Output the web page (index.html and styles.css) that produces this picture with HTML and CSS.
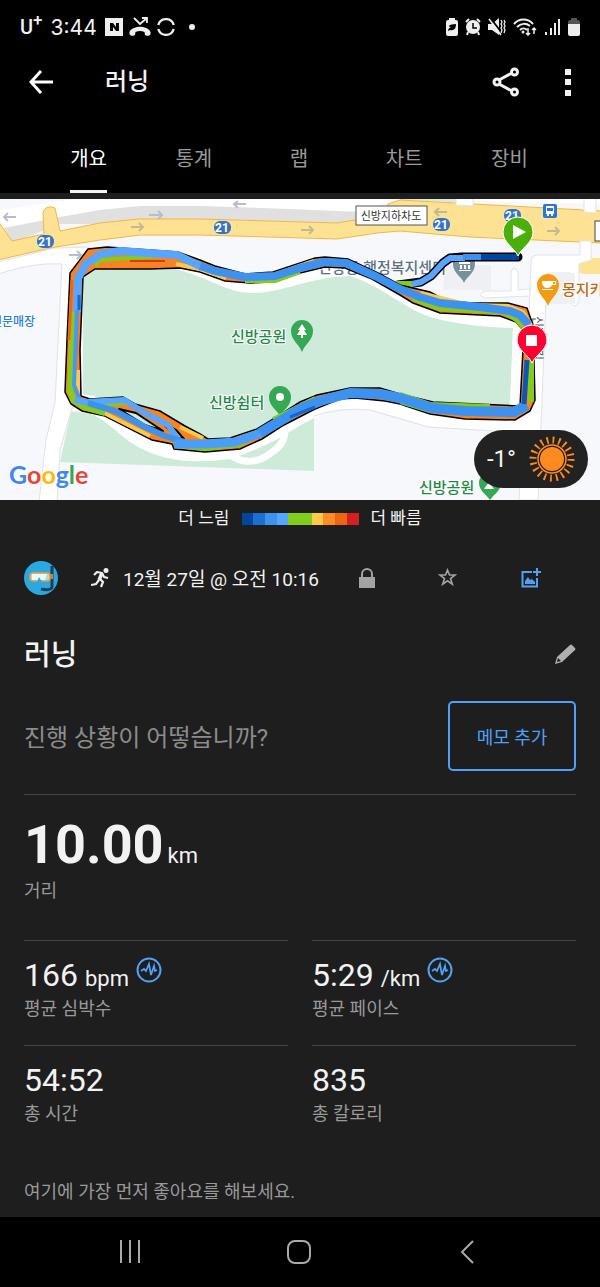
FILE: index.html
```html
<!DOCTYPE html>
<html lang="ko">
<head>
    <meta charset="UTF-8">
    <meta name="viewport" content="width=device-width, initial-scale=1.0">
    <title>러닝</title>
    <link rel="stylesheet" href="styles.css">
</head>
<body>
    <div class="status-bar">
        <div class="status-left">
            <span class="carrier">U<sup>+</sup></span>
            <span class="clock">3:44</span>
            <svg width="18" height="18" viewBox="0 0 18 18"><path fill="#eee" fill-rule="evenodd" d="M0 0h18v18H0zM5 5v8h3V9l3 4h3V5h-3v4L8 5z"/></svg>
            <svg width="22" height="20" viewBox="0 0 22 20"><path fill="#eee" d="M1 18c-2-3 1-6 4-7 4-1.600 8-1.600 12 0 3 1 6 4 4 7-1 1-4 1-5 0l-.5-3c-3-1.300-6-1.300-9 0L6 18c-1 1-4 1-5 0z"/><path fill="none" stroke="#eee" stroke-width="1.800" d="M5 1l6 6 7-6M13 1h5v5"/></svg>
            <svg width="18" height="18" viewBox="0 0 18 18"><path fill="none" stroke="#eee" stroke-width="2.400" d="M1.300 7A8 8 0 0 1 16.700 7M1.300 11A8 8 0 0 0 16.700 11"/></svg>
            <span class="dot"></span>
        </div>
        <div class="status-right">
            <svg width="12" height="18" viewBox="0 0 12 18"><path fill="#eee" d="M3 2V0h6v2h1q2 0 2 2v12q0 2-2 2H2q-2 0-2-2V4q0-2 2-2z"/><path fill="#000" d="M10 6c0 5-2 7-6 6l-2 1c0-2 1-3 3-4-4 0-2-3 5-3z"/></svg>
            <svg width="16" height="18" viewBox="0 0 16 18"><circle cx="8" cy="9" r="7" fill="#eee"/><path fill="none" stroke="#eee" stroke-width="2" d="M1 4l3-3M12 1l3 3M3 14l-1 3M13 14l1 3"/><path fill="none" stroke="#000" stroke-width="1.500" d="M8 5v5h4"/></svg>
            <svg width="18" height="18" viewBox="0 0 18 18"><path fill="#eee" d="M0 6h4l7-6v17l-7-5H0z"/><path stroke="#000" stroke-width="2" d="M3 1l11 14"/><path stroke="#eee" stroke-width="1.500" d="M1 1l12 16"/><path fill="none" stroke="#eee" stroke-width="1.300" d="M13 2l1 2-1 2 1 2-1 2 1 2-1 3M16 2l1 2-1 2 1 2-1 2 1 2-1 3"/></svg>
            <svg width="24" height="18" viewBox="0 0 24 18"><path fill="none" stroke="#eee" stroke-width="2" d="M1 6c5-6 14-6 19 0M4 9c4-4 9-4 13-1M7 12c2-2 5-2 7 0"/><circle cx="10" cy="14" r="1.500" fill="#eee"/><path fill="none" stroke="#eee" stroke-width="1.500" d="M15 10v7M13 15l2 2 2-2M21 16v-6M19 12l2-2 2 2"/></svg>
            <svg width="17" height="18" viewBox="0 0 17 18"><path stroke="#eee" stroke-width="2" d="M2 14v3M7 10v7M11 5v12M15 1v16"/></svg>
            <svg width="12" height="18" viewBox="0 0 12 18"><path fill="#555" d="M3 2V0h6v2h1q2 0 2 2v3H0V4q0-2 2-2z"/><path fill="#eee" d="M0 6h12v10q0 2-2 2H2q-2 0-2-2z"/></svg>
        </div>
    </div>

    <header class="app-bar">
        <button class="icon-button" aria-label="뒤로">
            <svg width="24" height="24" viewBox="0 0 24 24"><path fill="none" stroke="#fff" stroke-width="3" d="M12 1L2 12l10 11M2 12h22"/></svg>
        </button>
        <h1>러닝</h1>
        <button class="icon-button share" aria-label="공유">
            <svg width="28" height="30" viewBox="0 0 28 30"><g fill="none" stroke="#f2f2f2" stroke-width="3"><path d="M7 13l13-7M7 17l13 7"/><circle cx="5" cy="15" r="3"/><circle cx="22.500" cy="5" r="3"/><circle cx="22.500" cy="25" r="3"/></g></svg>
        </button>
        <button class="icon-button" aria-label="더보기">
            <svg width="6" height="27" viewBox="0 0 6 27"><path fill="#f2f2f2" d="M0 0h6v6H0zM0 10h6v6H0zM0 21h6v6H0z"/></svg>
        </button>
    </header>

    <nav class="tabs">
        <a href="#" class="active"><span>개요</span></a>
        <a href="#"><span>통계</span></a>
        <a href="#"><span>랩</span></a>
        <a href="#"><span>차트</span></a>
        <a href="#"><span>장비</span></a>
    </nav>

    <main>
        <div class="map">
            <svg class="map-canvas" viewBox="0 199 600 301" preserveAspectRatio="xMidYMid slice">
                <rect y="199" width="600" height="301" fill="#f7f8fb"/>

                <!-- top roads -->
                <path fill="#fff" d="M0 210L75 199H600V204L400 199 340 214 200 206H140L10 230 0 220z"/>
                <path fill="#e0e0e0" d="M4 228L60 217 100 210 140 206H200L290 209 385 213 350 224H60L12 243z"/>
                <path fill="#d6ebdc" d="M400 199h56v3l-56-2z"/>
                <path fill="#fff" stroke="#dfe2e8" d="M-2 262L55 248 90 247 78 268 81 395 72 408 60 450 57 502H39L46 440 55 403 62 264C40 263 25 266-2 274z"/>
                <path fill="#fff" d="M82 268L95 250 190 252 235 276 275 276 325 259 350 260 400 285 440 302 513 306V329L470 327 430 320 385 293 350 278 325 279 280 292 240 293 200 278 100 268 82 280z"/>
                <path fill="#fde293" stroke="#f4b740" d="M-2 221L12 241 44 234 43 213Q45 204 55 208L60 231 100 223 138 219H200L337 223 355 220 385 212 388 204 400 200 602 211V243L470 237 400 231 377 233 337 239 200 235H140L100 240 50 248-2 260z"/>
                <path fill="#fff" stroke="#dfe2e8" d="M456 190h17v16l-17-1zM584 190h12v23l-12-1z"/>
                <path fill="#fde293" d="M600 258h-15q-8 0-8 8t8 8h15z"/>

                <!-- streets on the right -->
                <g fill="#fff" stroke="#dfe2e8">
                    <path d="M531 262Q531 255 538 255H580V241H591V260L579 264V301Q573 312 571 300V273H547L538 500H519L528 340z"/>
                    <path d="M485 291L511 291V272Q514 264 518 272V290L530 289V296L485 298Q476 295 485 291z"/>
                </g>
                <path fill="#eff0f3" d="M445 265h46v25h-48zM548 273h27v31h-27z"/>

                <!-- park -->
                <path fill="#ceead8" d="M83 278L96 268H170C210 276 225 294 255 293S310 277 350 276C380 285 400 306 430 317Q465 327 513 328L510 407 430 405 360 390 310 400 270 425 210 442 170 430 83 400z"/>
                <path fill="#ceead8" d="M71 412L92 410 200 440 314 412 314 471 60 462z"/>
                <path fill="none" stroke="#fff" stroke-width="18" stroke-linejoin="round" d="M74 402L92 405Q105 409 124 426T168 449 228 450Q258 441 290 421T350 400 428 417L530 424"/>
                <path fill="none" stroke="#dfe2e8" stroke-width="1" d="M314 416Q340 407 370 410L428 427 510 432"/>
                <path fill="none" stroke="#fff" stroke-width="7" d="M232 456C248 466 262 461 275 450 286 441 285 434 285 422"/>
                <path fill="#fff" d="M513 328h10l-5 80h-8z"/>

                <!-- one way arrows -->
                <g fill="none" stroke="#b9bccb" stroke-width="2">
                    <path d="M16 217H4M8 213l-4 4 4 4M149 215h13M158 211l4 4-4 4M246 204H234M238 201l-4 3 4 4M69 255h12M77 251l4 4-4 4"/>
                    <path stroke="#c6b98f" d="M131 227h12M139 223l4 4-4 4M301 230h12M309 226l4 4-4 4M447 212H435M439 208l-4 4 4 4M547 231h12M555 227l4 4-4 4"/>
                </g>

                <!-- route number shields -->
                <g fill="#3674c6">
                    <rect x="37" y="235" width="17" height="13" rx="6"/>
                    <rect x="214" y="221" width="17" height="13" rx="6"/>
                    <rect x="433" y="218" width="17" height="13" rx="6"/>
                    <rect x="504" y="209" width="17" height="13" rx="6"/>
                </g>
                <g class="shield">
                    <text x="45" y="246">21</text>
                    <text x="222" y="232">21</text>
                    <text x="441" y="229">21</text>
                    <text x="512" y="220">21</text>
                </g>

                <rect x="356" y="206" width="71" height="19" fill="#fff" stroke="#555"/>
                <text class="road-name" x="391" y="220">신방지하차도</text>
                <rect x="595" y="221" width="20" height="20" fill="#fff" stroke="#444"/>
                <rect x="543" y="204" width="14" height="14" rx="2" fill="#2577df"/>
                <path fill="#fff" d="M546 206h8v8h-1v2h-2v-2h-2v2h-2v-2h-1zM547 208v3h6v-3z" fill-rule="evenodd"/>

                <text class="place blue" x="-9" y="326">전문매장</text>
                <text class="place slate" x="318" y="273">신방동 행정복지센터</text>
                <text class="place green" x="231" y="342">신방공원</text>
                <text class="place green" x="209" y="408">신방쉼터</text>
                <text class="place green" x="419" y="493">신방공원</text>
                <text class="place brown" x="562" y="295">몽지키</text>
                <text class="street" x="533" y="316" transform="rotate(90 533 316)">신방로길</text>

                <path fill="#34a853" d="M302 352C299 344 291 340 291 331A11 11 0 0 1 313 331C313 340 305 344 302 352z"/>
                <path fill="#fff" d="M302 324l4 6h-2l3 5h-4v3h-2v-3h-4l3-5h-2z"/>
                <path fill="#34a853" d="M280 416C277 410 269 406 269 397A11 11 0 0 1 291 397C291 406 283 410 280 416z"/>
                <circle cx="280" cy="397" r="4" fill="#fff"/>
                <path fill="#34a853" d="M490 500C487 495 479 491 479 483A11 11 0 0 1 501 483C501 491 493 495 490 500z"/>
                <path fill="#fff" d="M489 482l5 7h-10z"/>
                <path fill="#78909c" d="M464 283C462 277 453 273 453 264A11 11 0 0 1 475 264C475 273 466 277 464 283z"/>
                <path fill="#fff" d="M459 262h11v2h-11zM460 265h2v4h-2zM464 265h2v4h-2zM468 265h2v4h-2zM459 270h12v1h-12z"/>
                <path fill="#f39c12" d="M548 306C546 299 537 294 537 285A11 11 0 0 1 559 285C559 294 550 299 548 306z"/>
                <path fill="#fff" fill-rule="evenodd" d="M542 281h14v4h-4q-1 3-5 3-5 0-5-7zM553 282v2h2v-2zM542 289h11v1h-11z"/>

                <!-- first leg -->
                <g fill="none" stroke-linejoin="round">
                    <path stroke="#000" stroke-width="9" stroke-linecap="round" d="M518 257H462L450 258 443 263 431 276 421 282 398 285"/>
                    <path stroke="#84cc1c" stroke-width="6" d="M385 284L413 284"/>
                    <path stroke="#57a5ff" stroke-width="6" d="M412 284L421 282 431 276 443 263 450 258H465"/>
                    <path stroke="#3f8ff0" stroke-width="6" d="M463 257H481"/>
                    <path stroke="#0046a0" stroke-width="6" d="M481 257H519"/>
                </g>

                <!-- laps around the park -->
                <path fill="#f98222" fill-rule="evenodd" stroke="#000" stroke-width="1.500" d="M88 249L107 247 178 252 200 260 215 266 245 274 273 272 315 258 325 257 348 259 378 273 400 285 430 292 445 300 470 303 508 303 527 308 533 325 535 400 530 411 515 420 465 419 430 414 400 404 385 401 355 398 340 399 315 409 282 426 262 439 240 449 205 452 174 449 172 444 152 440 105 416 82 411 71 404 65 392 67 340 70 273zM95 269L150 269 180 268 200 272 225 281 250 283 272 282 300 273 325 267 345 268 372 279 400 295 413 303 440 313 500 316 516 322 523 330 523 350 520 406 433 402 400 394 380 388 350 388 317 395 300 402 275 418 257 429 230 438 208 439 200 434 185 426 160 411 135 404 123 397 90 399 81 396 80 350 83 277z"/>
                <g fill="none" stroke-linejoin="round">
                    <path stroke="#fdc94a" stroke-width="4" d="M176 264L200 269 226 278M268 277L314 261M420 293L470 305 508 306 523 312 531 325M78 370V394M180 427L203 438M100 411L150 436"/>
                    <path stroke="#84cc1c" stroke-width="4" d="M95 265L100 260 160 256M245 281H275L300 272M412 299L440 309 505 313 516 320 525 330M88 406L128 403 175 430M175 446L205 449 240 445 278 423M400 394L430 404 490 406M400 402L430 411 510 415M273 419L315 398"/>
                    <path stroke="#84cc1c" stroke-width="6" d="M74 312L70 390 73 400 84 407 105 413M531 355L531 402"/>
                    <path stroke="#ed6712" stroke-width="3" d="M72 280L69 340M77 323L76 355"/>
                    <path stroke="#d23c16" stroke-width="2" d="M130 261H165"/>
                    <path stroke="#000" stroke-width="2" fill="#ceead8" d="M119 409L136 413 163 431 145 425zM157 418L176 430 184 439 178 438z"/>
                    <path stroke="#57a5ff" stroke-width="8" d="M77 312L78 278 86 264 101 254 120 251 177 255 202 267"/>
                    <path stroke="#4598f5" stroke-width="4" d="M77 310L74 385 80 400"/>
                    <path stroke="#3d92f0" stroke-width="8" d="M200 266L215 271 245 277 275 276 300 268 324 262 346 263 375 276 400 289 420 297 440 303 480 307 510 311 520 315 529 325"/>
                    <path stroke="#57a5ff" stroke-width="6" d="M75 400L85 402 124 400 145 413 168 425 180 442"/>
                    <path stroke="#3d92f0" stroke-width="6" d="M88 403L115 411 145 427 165 436 185 442"/>
                    <path stroke="#4a9df8" stroke-width="9" d="M174 444H205L235 442 258 434 280 421 305 406"/>
                    <path stroke="#3d92f0" stroke-width="10" d="M260 433L300 409 320 401 350 393 380 394 400 398 432 408 465 411 514 412 527 405"/>
                    <path stroke="#0b57b8" stroke-width="5" d="M527 360L524 404"/>
                    <path stroke="#1668cf" stroke-width="3" d="M290 417L315 407M79 295V310"/>
                </g>

                <path fill="#4cae09" stroke="#fff" d="M518 256C514 247 503 243 503 232A15 15 0 0 1 533 232C533 243 522 247 518 256z"/>
                <path fill="#fff" d="M513 225l13 7-13 7z"/>
                <path fill="#ff0030" stroke="#fff" d="M532 363C528 354 517 350 517 340A15 15 0 0 1 547 340C547 350 536 354 532 363z"/>
                <path fill="#fff" d="M526 335h11v11h-11z"/>

                <text class="google" x="9" y="484"><tspan fill="#4285f4">G</tspan><tspan fill="#ea4335">o</tspan><tspan fill="#fbbc05">o</tspan><tspan fill="#4285f4">g</tspan><tspan fill="#34a853">l</tspan><tspan fill="#ea4335">e</tspan></text>
            </svg>
            <div class="weather">
                <span>-1°</span>
                <svg width="46" height="46" viewBox="-23 -23 46 46">
                    <circle r="12" fill="#ff8a22"/>
                    <circle r="14" fill="none" stroke="#ff8a22" stroke-width="1.500"/>
                    <circle r="19" fill="none" stroke="#ff8a22" stroke-width="7" stroke-dasharray="1.800 4.168"/>
                </svg>
            </div>
        </div>

        <div class="legend">
            <span>더 느림</span>
            <div class="scale">
                <i class="s1"></i><i class="s2"></i><i class="s3"></i><i class="s4"></i><i class="s5"></i><i class="s5"></i><i class="s6"></i><i class="s7"></i><i class="s8"></i><i class="s9"></i>
            </div>
            <span>더 빠름</span>
        </div>

        <section class="details">
            <div class="meta">
                <svg class="avatar" width="34" height="34" viewBox="0 0 34 34">
                    <circle cx="17" cy="17" r="17" fill="#2aa9e0"/>
                    <path fill="none" stroke="#1d3d5a" stroke-width="3" d="M28 5V26Q27 30 17 28"/>
                    <rect x="6" y="12" width="20" height="8" rx="3" fill="#a9dce6" stroke="#f09a3e" stroke-width="1.500"/>
                    <path fill="#e8f7f8" d="M8 13h15l-2 6H8z"/>
                    <path fill="#2aa9e0" d="M13 21l2-5 3 5z"/>
                    <path fill="#d9822b" d="M26 13h3v5h-3z"/>
                </svg>
                <svg class="runner" width="19" height="20" viewBox="0 0 19 20"><circle cx="15" cy="2.500" r="2.500" fill="#eee"/><path fill="none" stroke="#eee" stroke-width="2.200" stroke-linejoin="round" d="M3 7l3-3 5 1 2 4 4 1"/><path fill="none" stroke="#eee" stroke-width="3.500" d="M11 5l-3 7"/><path fill="none" stroke="#eee" stroke-width="2.200" d="M9 11l3 3-2 5M8 12l-3 4-5 1"/></svg>
                <span class="date">12월 27일 @ 오전 10:16</span>
                <div class="actions">
                    <button class="icon-button" aria-label="비공개"><svg width="16" height="20" viewBox="0 0 16 20"><path fill="#a3a3a3" d="M0 9h16v11H0z"/><path fill="none" stroke="#a3a3a3" stroke-width="2" d="M3 10V6a5 5 0 0 1 10 0v4"/></svg></button>
                    <button class="icon-button" aria-label="즐겨찾기"><svg width="19" height="18" viewBox="0 0 19 18"><path fill="none" stroke="#a3a3a3" stroke-width="1.600" d="M9.500 2l2 5h5.500l-4.500 3.600 1.800 5.600-4.800-3.400-4.800 3.400 1.800-5.600L2 7h5.500z"/></svg></button>
                    <button class="icon-button" aria-label="사진 추가"><svg width="20" height="20" viewBox="0 0 20 20"><path fill="none" stroke="#4fa1f5" stroke-width="2" d="M11 4H1.500v14.500H16V10M16 0v8M12 4h8"/><path fill="#4fa1f5" d="M4 16v-3l3-4 2 3 2-1 3 3v2z"/></svg></button>
                </div>
            </div>

            <div class="title-row">
                <h2>러닝</h2>
                <button class="icon-button" aria-label="이름 편집"><svg width="21" height="20" viewBox="0 0 21 20"><path fill="#b0b0b0" fill-rule="evenodd" d="M0 20l2-7L15 1q1-1 2 0l3 3q1 1 0 2L7 18zM3 14l-1 4 4-1z"/></svg></button>
            </div>

            <div class="note-row">
                <p>진행 상황이 어떻습니까?</p>
                <button class="note-button">메모 추가</button>
            </div>

            <div class="distance">
                <div><strong>10.00</strong> <span class="unit">km</span></div>
                <div class="label">거리</div>
            </div>

            <div class="stats">
                <div class="stat">
                    <div class="value">166 <span class="unit">bpm</span>
                        <svg class="pulse" width="26" height="26" viewBox="0 0 26 26"><circle cx="13" cy="13" r="11.500" fill="none" stroke="#4fa1f5" stroke-width="2"/><path fill="none" stroke="#4fa1f5" stroke-width="1.800" d="M5 14l3-2 2 2 3-7 2 11 3-9 1 5 2-1"/></svg>
                    </div>
                    <div class="label">평균 심박수</div>
                </div>
                <div class="stat">
                    <div class="value">5:29 <span class="unit">/km</span>
                        <svg class="pulse" width="26" height="26" viewBox="0 0 26 26"><circle cx="13" cy="13" r="11.500" fill="none" stroke="#4fa1f5" stroke-width="2"/><path fill="none" stroke="#4fa1f5" stroke-width="1.800" d="M5 14l3-2 2 2 3-7 2 11 3-9 1 5 2-1"/></svg>
                    </div>
                    <div class="label">평균 페이스</div>
                </div>
                <div class="stat">
                    <div class="value">54:52</div>
                    <div class="label">총 시간</div>
                </div>
                <div class="stat">
                    <div class="value">835</div>
                    <div class="label">총 칼로리</div>
                </div>
            </div>

            <p class="likes">여기에 가장 먼저 좋아요를 해보세요.</p>
        </section>
    </main>

    <footer class="system-nav">
        <button class="icon-button" aria-label="최근 앱"><svg width="22" height="24" viewBox="0 0 22 24"><path stroke="#aaa" stroke-width="2" d="M2 0v23M11 0v23M20 0v23"/></svg></button>
        <button class="icon-button" aria-label="홈"><svg width="24" height="24" viewBox="0 0 24 24"><rect x="1" y="1" width="22" height="22" rx="7" fill="none" stroke="#aaa" stroke-width="2"/></svg></button>
        <button class="icon-button" aria-label="뒤로 가기"><svg width="22" height="24" viewBox="0 0 22 24"><path fill="none" stroke="#aaa" stroke-width="2" d="M17 1L6 12l11 11"/></svg></button>
    </footer>
</body>
</html>
```

FILE: styles.css
```css
* {
    box-sizing: border-box;
}
body {
    display: flex;
    flex-direction: column;
    min-height: 100vh;
    margin: 0;
    background-color: #000;
    color: #f2f2f2;
    font-family: Roboto, "Noto Sans CJK KR", sans-serif;
}
h1, h2, p {
    margin: 0;
    font-weight: 500;
}
svg {
    display: block;
    flex-shrink: 0;
}
.icon-button {
    display: flex;
    padding: 0;
    border: 0;
    background: none;
}

/* status bar */
.status-bar {
    display: flex;
    align-items: center;
    justify-content: space-between;
    height: 54px;
    padding: 0 20px;
}
.status-left, .status-right {
    display: flex;
    align-items: center;
}
.status-left {
    gap: 6px;
}
.status-right {
    gap: 7px;
}
.carrier {
    font-size: 20px;
    font-weight: 500;
    line-height: 24px;
}
.carrier sup {
    font-size: 17px;
    line-height: 0;
}
.clock {
    margin: 0 2px;
    font-family: Inter, sans-serif;
    font-size: 21px;
    font-weight: 400;
}
.dot {
    width: 6px;
    height: 6px;
    margin-left: 8px;
    border-radius: 50%;
    background-color: #eee;
}

/* app bar */
.app-bar {
    display: flex;
    align-items: center;
    height: 56px;
    padding: 0 29px;
}
.app-bar h1 {
    margin-left: 52px;
    font-size: 24px;
    line-height: 32px;
}
.share {
    margin-left: auto;
    margin-right: 45px;
}
.tabs {
    display: flex;
    height: 83px;
    padding: 0 38px 0 36px;
}
.tabs a {
    display: flex;
    flex: 1;
    justify-content: center;
    color: #999;
    font-size: 20px;
    line-height: 98px;
    text-decoration: none;
}
.tabs .active {
    color: #fff;
}
.tabs .active span {
    height: 83px;
    border-bottom: 3px solid #f2f2f2;
}

/* map */
main {
    flex: 1;
    padding-top: 6px;
    background-color: #1e1e1e;
}
.map {
    position: relative;
}
.map-canvas {
    width: 100%;
}
.map-canvas text {
    font-family: Roboto, "Noto Sans CJK KR", sans-serif;
}
.place {
    font-size: 15px;
    font-weight: 500;
    stroke: #fff;
    stroke-width: 2px;
    paint-order: stroke;
}
.green {
    fill: #1e8a45;
}
.slate {
    fill: #5b7184;
}
.brown {
    fill: #c06a16;
}
.blue {
    font-size: 12px;
    fill: #2b7de0;
}
.street {
    font-size: 12px;
    fill: #555;
}
.road-name {
    font-size: 11px;
    fill: #333;
    text-anchor: middle;
}
.shield {
    font-size: 12px;
    font-weight: 700;
    fill: #fff;
    text-anchor: middle;
}
.map-canvas .google {
    font-family: Lato, sans-serif;
    font-size: 25px;
    font-weight: 700;
    stroke: #fff;
    stroke-width: 2px;
    paint-order: stroke;
}
.weather {
    position: absolute;
    right: 12px;
    bottom: 12px;
    display: flex;
    align-items: center;
    gap: 13px;
    height: 58px;
    padding: 0 13px;
    border-radius: 29px;
    background-color: #222;
    font-size: 24px;
}

/* pace legend */
.legend {
    display: flex;
    align-items: center;
    justify-content: center;
    gap: 12px;
    height: 38px;
    font-size: 17px;
    line-height: 24px;
}
.legend span {
    padding-bottom: 2px;
}
.scale {
    display: flex;
    width: 117px;
    height: 12px;
}
.scale i {
    flex: 1;
}
.s1 { background-color: #0046a0; }
.s2 { background-color: #1b70d2; }
.s3 { background-color: #3d92f0; }
.s4 { background-color: #57a5ff; }
.s5 { background-color: #84cc1c; }
.s6 { background-color: #fdc94a; }
.s7 { background-color: #fd8c26; }
.s8 { background-color: #ed6712; }
.s9 { background-color: #d42020; }

/* activity details */
.details {
    padding: 0 24px;
}
.meta {
    display: flex;
    align-items: center;
    height: 80px;
}
.runner {
    margin: 0 13px 0 33px;
}
.date {
    padding-bottom: 2px;
    font-size: 19px;
}
.actions {
    display: flex;
    flex: 1;
    justify-content: space-between;
    padding: 0 35px 0 40px;
}
.title-row {
    display: flex;
    align-items: center;
    justify-content: space-between;
    height: 72px;
}
.title-row h2 {
    padding-bottom: 4px;
    font-size: 29px;
}
.note-row {
    display: flex;
    align-items: center;
    justify-content: space-between;
    padding: 11px 0 23px;
    border-bottom: 1px solid #444;
}
.note-row p {
    padding-bottom: 2px;
    color: #8c8c8c;
    font-size: 24px;
    font-weight: 400;
}
.note-button {
    width: 128px;
    height: 70px;
    padding-bottom: 2px;
    border: 2px solid #4fa1f5;
    border-radius: 5px;
    background: none;
    color: #4fa1f5;
    font-family: inherit;
    font-size: 18px;
}
.distance {
    padding: 18px 0 37px;
}
.distance strong {
    font-size: 54px;
    line-height: 64px;
}
.distance .label {
    margin-top: 2px;
}
.unit {
    font-size: 22px;
}
.label {
    color: #999;
    font-size: 18px;
    line-height: 24px;
}
.stats {
    display: grid;
    grid-template-columns: 1fr 1fr;
    column-gap: 24px;
}
.stat {
    height: 105px;
    padding-top: 16px;
    border-top: 1px solid #444;
}
.value {
    display: flex;
    align-items: baseline;
    gap: 7px;
    height: 40px;
    font-size: 32px;
    line-height: 36px;
}
.pulse {
    align-self: flex-start;
}
.likes {
    padding: 30px 0 12px;
    color: #999;
    font-size: 18px;
    font-weight: 400;
    line-height: 24px;
}

/* system navigation */
.system-nav {
    display: flex;
    align-items: center;
    justify-content: space-between;
    height: 70px;
    padding: 0 122px 0 119px;
}
```
